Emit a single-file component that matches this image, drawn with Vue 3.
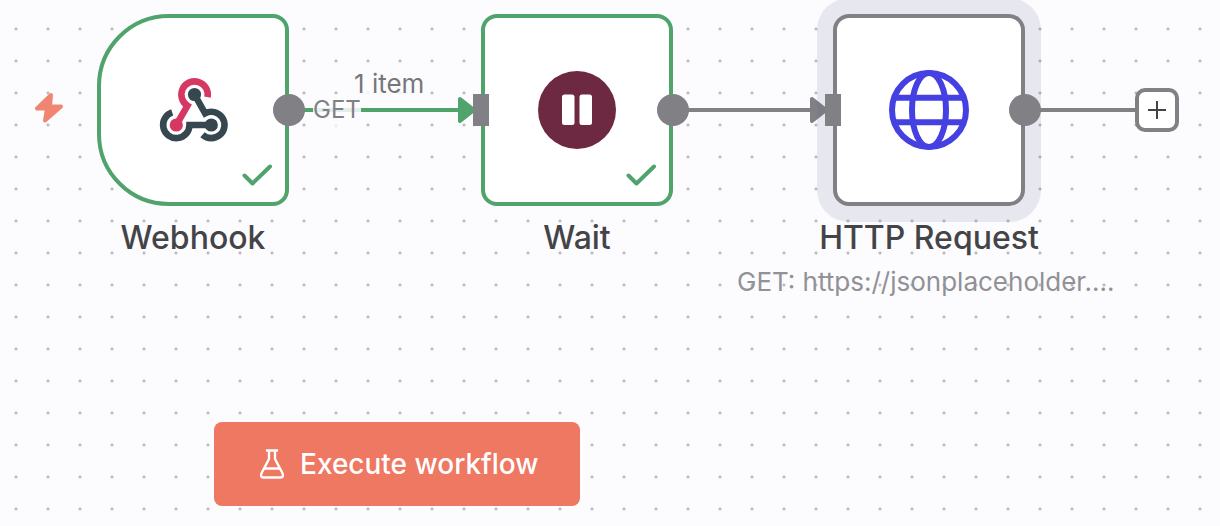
<script setup>
const nodes = [
  { id: 'webhook', name: 'Webhook', subtitle: '', input: false, done: true },
  { id: 'wait', name: 'Wait', subtitle: '', input: true, done: true },
  { id: 'http', name: 'HTTP Request', subtitle: 'GET: https://jsonplaceholder.…', input: true, done: false },
]
</script>

<template>
  <main class="canvas">
    <svg class="edges" aria-hidden="true">
      <path class="edge success" d="M289 110H462" />
      <path class="tip success" d="M460 99L474 110L460 121Z" />
      <path class="edge" d="M673 110H814" />
      <path class="tip" d="M812 99L826 110L812 121Z" />
      <path class="edge" d="M1025 110H1137" />
    </svg>

    <svg class="bolt" viewBox="0 0 30 32" aria-hidden="true">
      <path d="M17 3L3 16.5H13L11 28.5L27 14.500H16Z" />
    </svg>

    <span class="items">1 item</span>
    <span class="method">GET</span>

    <section v-for="node in nodes" :key="node.id" class="node" :class="[node.id, { done: node.done }]">
      <div class="box">
        <svg v-if="node.id === 'webhook'" class="icon" viewBox="0 0 80 80" aria-hidden="true">
          <g fill="none" stroke-width="6.6">
            <path stroke="#37474f" d="M58.3 55H36.5A13.2 13.2 0 1 1 19.2 42.4" />
            <path stroke="#37474f" d="M41.5 24.5L52.1 43.3A13.2 13.2 0 1 1 49.5 64.8" />
            <path stroke="#d63864" d="M23.3 55L34.5 35.7A13.2 13.2 0 1 1 54.5 27.2" />
          </g>
          <circle cx="41.5" cy="24.5" r="6.6" fill="#37474f" />
          <circle cx="58.3" cy="55" r="6.6" fill="#37474f" />
          <circle cx="23.3" cy="55" r="6.6" fill="#d63864" />
        </svg>
        <svg v-else-if="node.id === 'wait'" class="icon" viewBox="0 0 80 80" aria-hidden="true">
          <circle cx="40" cy="40" r="39" fill="#6d2842" />
          <rect x="25" y="24.5" width="12.5" height="30.5" rx="2.5" fill="#fff" />
          <rect x="42.5" y="24.5" width="12.5" height="30.5" rx="2.5" fill="#fff" />
        </svg>
        <svg v-else class="icon" viewBox="0 0 80 80" aria-hidden="true">
          <g fill="none" stroke="#4540e2" stroke-width="6">
            <circle cx="40" cy="40" r="37" />
            <ellipse cx="40" cy="40" rx="17" ry="37" />
            <path d="M6 27.7H74M6 52.3H74" />
          </g>
        </svg>
        <svg v-if="node.done" class="check" viewBox="0 0 30 22" aria-hidden="true">
          <path d="M2.5 11.500L10.500 19.500L28 2.500" />
        </svg>
        <i v-if="node.input" class="port in"></i>
        <i class="port out"></i>
      </div>
      <h2 class="name">{{ node.name }}</h2>
      <p v-if="node.subtitle" class="subtitle">{{ node.subtitle }}</p>
    </section>

    <button class="add" type="button" aria-label="Add node">
      <svg viewBox="0 0 36 36" aria-hidden="true"><path d="M18 9V27M9 18H27" /></svg>
    </button>

    <button class="execute" type="button">
      <svg viewBox="0 0 24 30" aria-hidden="true">
        <path d="M7 1.5H17M9 1.5V10L1.5 24.3Q0 28.5 3.5 28.5H20.5Q24 28.5 22.5 24.3L15 10V1.5M5 19.5H19" />
      </svg>
      <span>Execute workflow</span>
    </button>
  </main>
</template>

<style>
body {
  margin: 0;
}
</style>

<style scoped>
.canvas {
  position: relative;
  display: flex;
  flex-direction: column;
  align-items: flex-start;
  justify-content: flex-end;
  box-sizing: border-box;
  min-height: 100vh;
  padding: 0 0 20px 214px;
  overflow: hidden;
  font-family: Inter, "Liberation Sans", sans-serif;
  background-color: #fcfcff;
  background-image: radial-gradient(circle at 16px 29px, #bcbcc0 1px, transparent 2px);
  background-size: 32px 32px;
}

.edges {
  position: absolute;
  top: 0;
  left: 0;
  width: 100%;
  height: 100%;
}

.edge {
  fill: none;
  stroke: #808085;
  stroke-width: 4;
}

.tip {
  fill: #808085;
  stroke: #808085;
  stroke-width: 4;
  stroke-linejoin: round;
}

.success {
  stroke: #51a36c;
}

.tip.success {
  fill: #51a36c;
}

.bolt {
  position: absolute;
  top: 92px;
  left: 34px;
  width: 30px;
  height: 32px;
  fill: #f08671;
  stroke: #f08671;
  stroke-width: 4;
  stroke-linejoin: round;
}

.items,
.method {
  position: absolute;
  line-height: 32px;
  background: rgba(252, 252, 255, 0.85);
}

.items {
  top: 68px;
  left: 354px;
  font-size: 26px;
  color: #77777b;
}

.method {
  top: 94px;
  left: 313px;
  font-size: 24px;
  color: #808085;
}

.node {
  position: absolute;
  top: 14px;
  width: 192px;
  display: flex;
  flex-direction: column;
  align-items: center;
}

.webhook {
  left: 97px;
}

.wait {
  left: 481px;
}

.http {
  left: 833px;
}

.box {
  position: relative;
  display: flex;
  align-items: center;
  justify-content: center;
  box-sizing: border-box;
  width: 192px;
  height: 192px;
  border: 4px solid #808085;
  border-radius: 16px;
  background: #fff;
}

.done .box {
  border-color: #51a36c;
}

.webhook .box {
  border-radius: 72px 16px 16px 72px;
}

.http .box {
  box-shadow: 0 0 0 16px rgba(90, 90, 140, 0.13);
}

.icon {
  width: 80px;
  height: 80px;
}

.check {
  position: absolute;
  right: 13px;
  bottom: 16px;
  width: 30px;
  height: 22px;
  fill: none;
  stroke: #51a36c;
  stroke-width: 4;
  stroke-linecap: round;
  stroke-linejoin: round;
}

.port {
  position: absolute;
  top: 76px;
  height: 32px;
  background: #808085;
}

.in {
  left: -12px;
  width: 16px;
}

.out {
  right: -20px;
  width: 32px;
  border-radius: 50%;
}

.name {
  margin: 12px 0 0;
  font-size: 32px;
  font-weight: 500;
  line-height: 40px;
  white-space: nowrap;
  color: #444447;
}

.subtitle {
  width: 384px;
  margin: 8px 0 0;
  font-size: 26px;
  line-height: 32px;
  white-space: nowrap;
  color: #919196;
}

.add {
  position: absolute;
  top: 88px;
  left: 1135px;
  box-sizing: border-box;
  width: 44px;
  height: 44px;
  padding: 0;
  border: 4px solid #808085;
  border-radius: 10px;
  background: #fff;
}

.add svg {
  display: block;
  fill: none;
  stroke: #444447;
  stroke-width: 2;
}

.execute {
  position: relative;
  display: flex;
  align-items: center;
  gap: 16px;
  height: 84px;
  padding: 0 42px 0 46px;
  border: 0;
  border-radius: 8px;
  font-family: inherit;
  font-size: 28px;
  font-weight: 500;
  line-height: 36px;
  white-space: nowrap;
  color: #fff;
  background: #ee7862;
}

.execute svg {
  width: 24px;
  height: 30px;
  fill: none;
  stroke: #fff;
  stroke-width: 2.4;
  stroke-linecap: round;
  stroke-linejoin: round;
}
</style>
